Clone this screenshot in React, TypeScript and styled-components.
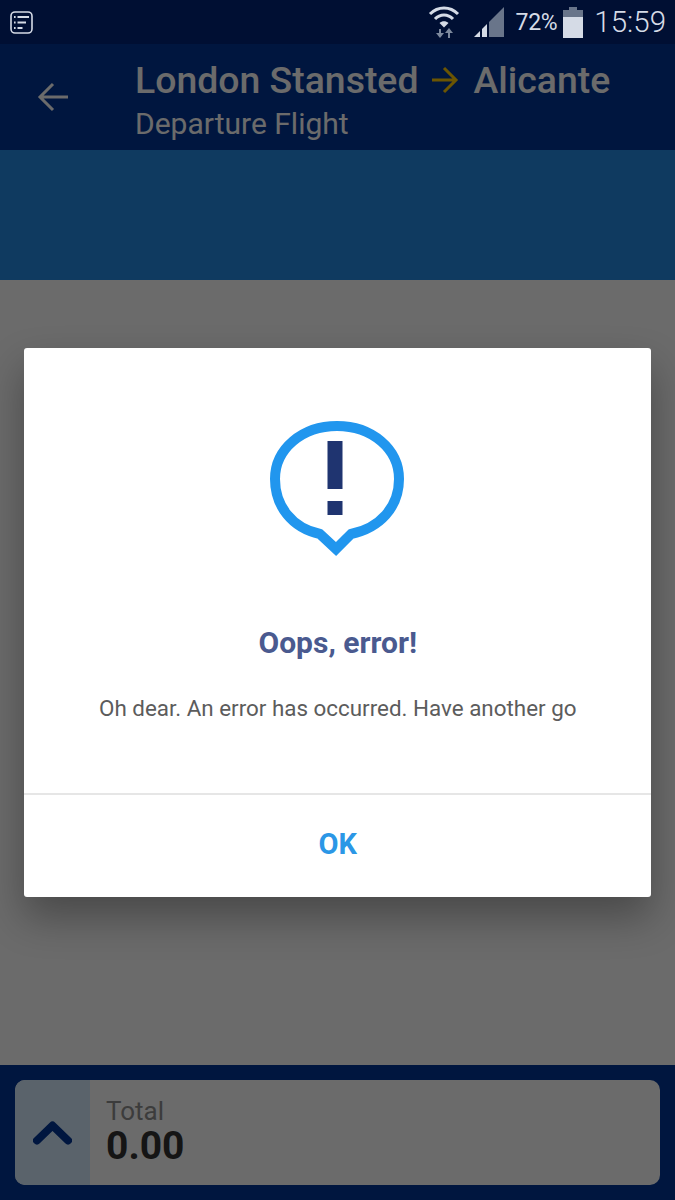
import styled, { createGlobalStyle } from "styled-components";

const GlobalStyle = createGlobalStyle`
  html, body {
    margin: 0;
    padding: 0;
    background: #fff;
  }
  * {
    box-sizing: border-box;
  }
`;

const Screen = styled.div`
  position: relative;
  width: 675px;
  height: 1200px;
  overflow: hidden;
  display: flex;
  flex-direction: column;
  font-family: Roboto, "Liberation Sans", sans-serif;
`;

const StatusBar = styled.div`
  height: 44px;
  flex: none;
  background: #000f33;
  color: #d5dbe6;
  display: flex;
  align-items: center;
  padding: 0 9px;
`;

const StatusRight = styled.div`
  margin-left: auto;
  display: flex;
  align-items: center;
`;

const Percent = styled.span`
  font-size: 23px;
  margin: 0 6px 0 11px;
  letter-spacing: -0.3px;
`;

const Clock = styled.span`
  font-size: 29.5px;
  font-weight: 300;
  margin-left: 11px;
`;

const Header = styled.header`
  height: 106px;
  flex: none;
  background: #003596;
  color: #fff;
  display: flex;
  align-items: center;
  padding-left: 37px;
`;

const BackButton = styled.div`
  width: 98px;
  flex: none;
  display: flex;
  align-items: center;
`;

const Titles = styled.div`
  display: flex;
  flex-direction: column;
  margin-top: 5px;
`;

const Route = styled.div`
  display: flex;
  align-items: center;
  gap: 14px;
  font-size: 37.4px;
  font-weight: 500;
  line-height: 44px;
`;

const Subtitle = styled.div`
  font-size: 30px;
  line-height: 36px;
  margin-top: 4px;
`;

const Band = styled.div`
  height: 130px;
  flex: none;
  background: #248ae5;
`;

const Content = styled.main`
  flex: 1;
  background: #fff;
`;

const Footer = styled.footer`
  height: 135px;
  flex: none;
  background: #003596;
  padding: 15px;
`;

const TotalCard = styled.div`
  height: 105px;
  background: #fff;
  border-radius: 10px;
  overflow: hidden;
  display: flex;
`;

const Toggle = styled.div`
  width: 75px;
  flex: none;
  background: #d6ecff;
  display: flex;
  align-items: center;
  justify-content: center;
`;

const TotalText = styled.div`
  padding: 17px 0 0 16px;
  display: flex;
  flex-direction: column;
`;

const TotalLabel = styled.span`
  font-size: 26px;
  line-height: 28px;
  color: #8f8f8f;
`;

const TotalValue = styled.span`
  font-size: 39px;
  line-height: 42px;
  font-weight: 700;
  color: #333;
`;

const Scrim = styled.div`
  position: absolute;
  top: 44px;
  left: 0;
  right: 0;
  bottom: 0;
  background: rgba(0, 0, 0, 0.58);
  display: flex;
  align-items: center;
  justify-content: center;
`;

const Dialog = styled.div`
  width: 627px;
  height: 549px;
  margin-left: 0.5px;
  background: #fff;
  border-radius: 3px;
  box-shadow: 0 20px 40px rgba(0, 0, 0, 0.32);
  display: flex;
  flex-direction: column;
  align-items: center;
`;

const DialogIcon = styled.svg`
  margin: 73px 2px 0 0;
  flex: none;
`;

const DialogTitle = styled.h2`
  margin: 69px 0 0;
  font-size: 30px;
  line-height: 36px;
  font-weight: 700;
  color: #4a5a8f;
`;

const DialogBody = styled.p`
  margin: 32px 0 0;
  font-size: 22.4px;
  line-height: 30px;
  color: #5c5c5c;
`;

const DialogActions = styled.div`
  margin-top: 70px;
  flex: 1;
  width: 100%;
  border-top: 2px solid #e6e6e6;
  display: flex;
  align-items: center;
  justify-content: center;
  padding-bottom: 4px;
`;

const OkButton = styled.span`
  font-size: 29px;
  font-weight: 700;
  color: #2b97e6;
`;

const App = () => {
  return (
    <>
      <GlobalStyle />
      <Screen>
        <StatusBar>
          <svg width="24" height="24" viewBox="0 0 24 24" fill="none">
            <rect x="2" y="2" width="21" height="21" rx="4" stroke="#d5dbe6" strokeWidth="1.6" />
            <path d="M5 7h1.6M5 12.5h1.6M5 18h1.6" stroke="#d5dbe6" strokeWidth="2" />
            <path d="M8.5 7H20M8.5 12.5h8.5M8.5 18h5" stroke="#d5dbe6" strokeWidth="2.2" />
          </svg>
          <StatusRight>
            <svg width="32" height="34" viewBox="0 0 32 34" fill="none">
              <path d="M2 9C10 1 22 1 30 9" stroke="#d5dbe6" strokeWidth="3" />
              <path d="M7 14C12 8.500 20 8.500 25 14" stroke="#d5dbe6" strokeWidth="3" />
              <path d="M11.500 18C14 15.500 18 15.500 20.500 18L16 22.500Z" fill="#d5dbe6" />
              <path d="M12 24v6" stroke="#7d899d" strokeWidth="2" />
              <path d="M8 28h8l-4 5Z" fill="#7d899d" />
              <path d="M21 33v-6" stroke="#7d899d" strokeWidth="2" />
              <path d="M17 28h8l-4-5Z" fill="#7d899d" />
            </svg>
            <svg width="32" height="32" viewBox="0 0 32 32" style={{ marginLeft: 13 }}>
              <path d="M1 31l6-6v6Z" fill="#d5dbe6" />
              <path d="M9 23l5-5v13H9Z" fill="#d5dbe6" />
              <path d="M16 16L31 1v30H16Z" fill="#69758a" />
            </svg>
            <Percent>72%</Percent>
            <svg width="20" height="31" viewBox="0 0 20 31">
              <path d="M6 0h8v3h6v7H0V3h6Z" fill="#69758a" />
              <rect y="10" width="20" height="21" fill="#d5dbe6" />
            </svg>
            <Clock>15:59</Clock>
          </StatusRight>
        </StatusBar>
        <Header>
          <BackButton>
            <svg width="32" height="30" viewBox="0 0 32 30" fill="none" stroke="#fff" strokeWidth="3">
              <path d="M31 15H3M16 2 3 15l13 13" />
            </svg>
          </BackButton>
          <Titles>
            <Route>
              London Stansted
              <svg width="27" height="28" viewBox="0 0 27 28" fill="none" stroke="#ffcb05" strokeWidth="3">
                <path d="M0 14h24M12 2l12 12-12 12" />
              </svg>
              Alicante
            </Route>
            <Subtitle>Departure Flight</Subtitle>
          </Titles>
        </Header>
        <Band />
        <Content />
        <Footer>
          <TotalCard>
            <Toggle>
              <svg width="39" height="25" viewBox="0 0 39 25" fill="none" stroke="#003596" strokeWidth="8" strokeLinecap="round" strokeLinejoin="round">
                <path d="M4 20.500 19.500 5.500 35 20.500" />
              </svg>
            </Toggle>
            <TotalText>
              <TotalLabel>Total</TotalLabel>
              <TotalValue>0.00</TotalValue>
            </TotalText>
          </TotalCard>
        </Footer>
        <Scrim>
          <Dialog>
            <DialogIcon width="134" height="135" viewBox="0 0 134 135" fill="none">
              <path
                d="M50 113C22 107 5 85 5 58C5 28 32 5 67 5C102 5 129 28 129 58C129 86 110 107 81 113L66 128Z"
                stroke="#2196ee"
                strokeWidth="10"
              />
              <rect x="57.500" y="20" width="15" height="48" fill="#1f3470" />
              <rect x="57.500" y="80" width="15" height="14" fill="#1f3470" />
            </DialogIcon>
            <DialogTitle>Oops, error!</DialogTitle>
            <DialogBody>Oh dear. An error has occurred. Have another go</DialogBody>
            <DialogActions>
              <OkButton>OK</OkButton>
            </DialogActions>
          </Dialog>
        </Scrim>
      </Screen>
    </>
  );
};

export default App;
